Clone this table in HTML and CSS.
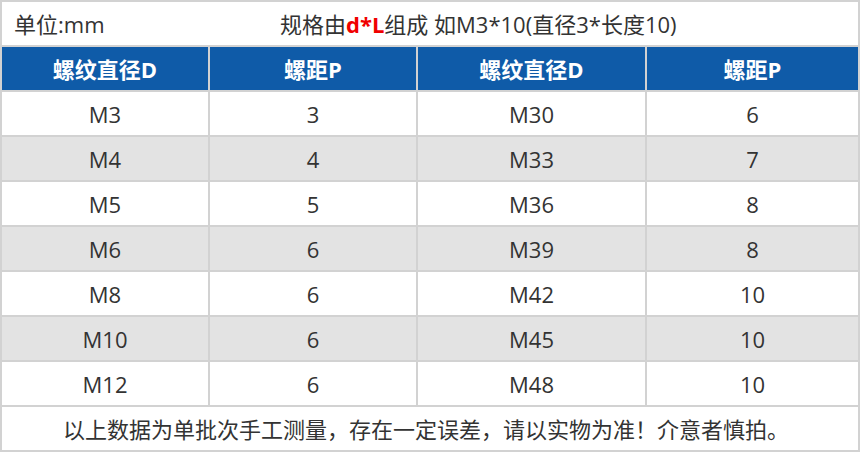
FILE: index.html
```html
<!DOCTYPE html>
<html lang="zh">
<head>
<meta charset="utf-8">
<link rel="stylesheet" href="styles.css">
</head>
<body>
<table class="spec">
  <colgroup>
    <col class="c1"><col class="c2"><col class="c3"><col class="c4">
  </colgroup>
  <tr class="title-row">
    <td colspan="4">
      <div class="title">
        <span class="unit">单位:mm</span>
        <span class="desc">规格由<b class="red">d*L</b>组成 如M3*10(直径3*长度10)</span>
      </div>
    </td>
  </tr>
  <tr class="head">
    <th>螺纹直径D</th><th>螺距P</th><th>螺纹直径D</th><th>螺距P</th>
  </tr>
  <tr><td>M3</td><td>3</td><td>M30</td><td>6</td></tr>
  <tr class="alt"><td>M4</td><td>4</td><td>M33</td><td>7</td></tr>
  <tr><td>M5</td><td>5</td><td>M36</td><td>8</td></tr>
  <tr class="alt"><td>M6</td><td>6</td><td>M39</td><td>8</td></tr>
  <tr><td>M8</td><td>6</td><td>M42</td><td>10</td></tr>
  <tr class="alt"><td>M10</td><td>6</td><td>M45</td><td>10</td></tr>
  <tr><td>M12</td><td>6</td><td>M48</td><td>10</td></tr>
  <tr class="foot">
    <td colspan="4"><span class="note">以上数据为单批次手工测量，存在一定误差，请以实物为准！介意者慎拍。</span></td>
  </tr>
</table>
</body>
</html>
```
FILE: styles.css
```css
html, body {
  margin: 0;
  padding: 0;
  background: #ffffff;
}
body {
  font-family: "Open Sans", "Noto Sans CJK SC", sans-serif;
  color: #333333;
}
.spec {
  border-collapse: collapse;
  table-layout: fixed;
  width: 858px;
}
.c1 { width: 208px; }
.c2 { width: 208px; }
.c3 { width: 229px; }
.c4 { width: 213px; }
.spec td, .spec th {
  border: 2px solid #d2d2d2;
  height: 43px;
  padding: 0;
  text-align: center;
  vertical-align: middle;
  font-size: 22px;
  line-height: 24px;
}
.title-row td {
  text-align: left;
}
.title {
  display: flex;
  align-items: center;
}
.unit {
  padding-left: 12px;
}
.desc {
  flex: 1;
  text-align: center;
  padding-right: 6px;
}
.red {
  color: #f00000;
  font-weight: 700;
}
.head th {
  background: #0f5ba8;
  color: #ffffff;
  font-weight: 700;
}
.alt td {
  background: #e3e3e3;
}
.note {
  display: inline-block;
  padding-left: 2px;
  padding-right: 10px;
}
```
